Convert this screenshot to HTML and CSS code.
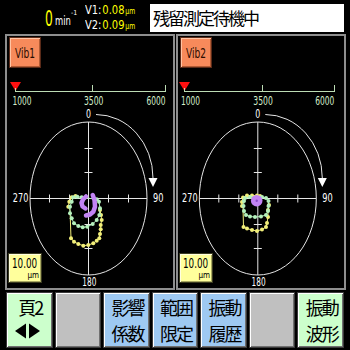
FILE: index.html
```html
<!DOCTYPE html>
<html lang="ja">
<head>
<meta charset="utf-8">
<title>残留測定待機中</title>
<link rel="stylesheet" href="styles.css">
</head>
<body>
<div class="screen">
  <header class="top">
    <div class="speed">
      <span class="rpm">0</span>
      <span class="unit"><span class="unit-txt">min</span><span class="unit-exp">-1</span></span>
      <div class="vals">
        <div class="val">V1:<span class="num">0.08</span><span class="um">μm</span></div>
        <div class="val">V2:<span class="num">0.09</span><span class="um">μm</span></div>
      </div>
    </div>
    <div class="title">残留測定待機中</div>
  </header>

  <main class="panels">
    <section class="panel">
      <div class="vib-btn"><span class="vib-txt">Vib1</span></div>
      <svg class="chart" width="166" height="220" viewBox="7 68 166 220">
        <polygon points="10,82 21,82 15.5,91" fill="#ff1010"/>
        <g class="scale">
          <line x1="15" y1="91.5" x2="166" y2="91.5"/>
          <line x1="15.5" y1="88" x2="15.5" y2="91"/>
          <line x1="92.5" y1="85" x2="92.5" y2="91"/>
          <line x1="165.5" y1="85" x2="165.5" y2="91"/>
        </g>
        <text class="scale-lbl" x="12.5" y="105" textLength="19" lengthAdjust="spacingAndGlyphs">1000</text>
        <text class="scale-lbl" x="84" y="105" textLength="19.5" lengthAdjust="spacingAndGlyphs">3500</text>
        <text class="scale-lbl" x="146.5" y="105" textLength="19" lengthAdjust="spacingAndGlyphs">6000</text>
        <g class="polar">
          <ellipse cx="88.5" cy="198.5" rx="58.5" ry="76.5"/>
          <line x1="30" y1="198.5" x2="147" y2="198.5"/>
          <line x1="88.5" y1="122" x2="88.5" y2="275"/>
          <line x1="49.5" y1="194.5" x2="49.5" y2="202.5"/>
          <line x1="69.5" y1="194.5" x2="69.5" y2="202.5"/>
          <line x1="108.5" y1="194.5" x2="108.5" y2="202.5"/>
          <line x1="128.5" y1="194.5" x2="128.5" y2="202.5"/>
          <line x1="84.5" y1="148.5" x2="92.5" y2="148.5"/>
          <line x1="84.5" y1="172.5" x2="92.5" y2="172.5"/>
          <line x1="84.5" y1="224.5" x2="92.5" y2="224.5"/>
          <line x1="84.5" y1="248.5" x2="92.5" y2="248.5"/>
          <path d="M96,114.5 A57,63.5 0 0 1 153,178"/>
          <polygon class="head" points="148.5,178 157.5,178 153,187"/>
          <text class="axis-lbl" x="86" y="118" textLength="5" lengthAdjust="spacingAndGlyphs">0</text>
          <text class="axis-lbl" x="12.8" y="202" textLength="15.5" lengthAdjust="spacingAndGlyphs">270</text>
          <text class="axis-lbl" x="153" y="202" textLength="10.5" lengthAdjust="spacingAndGlyphs">90</text>
          <text class="axis-lbl" x="82.3" y="286" textLength="14" lengthAdjust="spacingAndGlyphs">180</text>
        </g>
        <g class="trace yellow">
          <polyline points="100,210 101,215 101.7,220 100.7,225 100.7,229.3 100,234 99.3,238.3 96.7,240.7 93.3,243.3 88.3,245 83.3,245.7 78.3,244 74,241.7 71,238.3 70,210 68.3,206.7 69.3,201.7 71.7,197.3 75.5,196"/>
          <circle cx="100" cy="210" r="2"/><circle cx="101" cy="215" r="2"/><circle cx="101.7" cy="220" r="2"/><circle cx="100.7" cy="225" r="2"/><circle cx="100.7" cy="229.3" r="2"/><circle cx="100" cy="234" r="2"/><circle cx="99.3" cy="238.3" r="2"/><circle cx="96.7" cy="240.7" r="2"/><circle cx="93.3" cy="243.3" r="2"/><circle cx="88.3" cy="245" r="2"/><circle cx="83.3" cy="245.7" r="2"/><circle cx="78.3" cy="244" r="2"/><circle cx="74" cy="241.7" r="2"/><circle cx="71" cy="238.3" r="2"/><circle cx="68.3" cy="206.7" r="2"/><circle cx="69.3" cy="201.7" r="2"/><circle cx="71.7" cy="197.3" r="2"/><circle cx="75.5" cy="196" r="2"/>
        </g>
        <g class="trace green">
          <polyline points="73.3,197.3 77.3,196.7 81.7,197.3 96.7,199.3 99,201.7 100,208.3 99.3,215 96.7,220 92.7,224 87.3,226.7 82.7,227.3 78.3,226 74,223.3 71.7,218.3 70,213.3 70,206.7 71.7,201.7 73.3,197.3"/>
          <circle cx="73.3" cy="197.3" r="2"/><circle cx="77.3" cy="196.7" r="2"/><circle cx="81.7" cy="197.3" r="2"/><circle cx="96.7" cy="199.3" r="2"/><circle cx="99" cy="201.7" r="2"/><circle cx="100" cy="208.3" r="2"/><circle cx="99.3" cy="215" r="2"/><circle cx="96.7" cy="220" r="2"/><circle cx="92.7" cy="224" r="2"/><circle cx="87.3" cy="226.7" r="2"/><circle cx="82.7" cy="227.3" r="2"/><circle cx="78.3" cy="226" r="2"/><circle cx="74" cy="223.3" r="2"/><circle cx="71.7" cy="218.3" r="2"/><circle cx="70" cy="213.3" r="2"/><circle cx="70" cy="206.7" r="2"/><circle cx="71.7" cy="201.7" r="2"/>
        </g>
        <g class="trace purple">
          <polyline points="86,196.5 83,199.5 81.5,203 82.5,206.5 85.5,208.5"/>
          <polyline points="92.7,195 94.5,200 95,206.7 93.3,211.7 90,214.5 86,215.5"/>
        </g>
      </svg>
      <div class="range-box"><span class="range-num">10.00</span><span class="range-unit">μm</span></div>
    </section>

    <section class="panel">
      <div class="vib-btn"><span class="vib-txt">Vib2</span></div>
      <svg class="chart" width="166" height="220" viewBox="178 68 166 220">
        <polygon points="179,82 190,82 184.5,91" fill="#ff1010"/>
        <g class="scale">
          <line x1="184" y1="91.5" x2="335" y2="91.5"/>
          <line x1="184.5" y1="88" x2="184.5" y2="91"/>
          <line x1="262.5" y1="85" x2="262.5" y2="91"/>
          <line x1="334.5" y1="85" x2="334.5" y2="91"/>
        </g>
        <text class="scale-lbl" x="181" y="105" textLength="19" lengthAdjust="spacingAndGlyphs">1000</text>
        <text class="scale-lbl" x="253.3" y="105" textLength="19.5" lengthAdjust="spacingAndGlyphs">3500</text>
        <text class="scale-lbl" x="315.3" y="105" textLength="19" lengthAdjust="spacingAndGlyphs">6000</text>
        <g class="polar" transform="translate(169.3 0)">
          <ellipse cx="88.5" cy="198.5" rx="58.5" ry="76.5"/>
          <line x1="30" y1="198.5" x2="147" y2="198.5"/>
          <line x1="88.5" y1="122" x2="88.5" y2="275"/>
          <line x1="49.5" y1="194.5" x2="49.5" y2="202.5"/>
          <line x1="69.5" y1="194.5" x2="69.5" y2="202.5"/>
          <line x1="108.5" y1="194.5" x2="108.5" y2="202.5"/>
          <line x1="128.5" y1="194.5" x2="128.5" y2="202.5"/>
          <line x1="84.5" y1="148.5" x2="92.5" y2="148.5"/>
          <line x1="84.5" y1="172.5" x2="92.5" y2="172.5"/>
          <line x1="84.5" y1="224.5" x2="92.5" y2="224.5"/>
          <line x1="84.5" y1="248.5" x2="92.5" y2="248.5"/>
          <path d="M96,114.5 A57,63.5 0 0 1 153,178"/>
          <polygon class="head" points="148.5,178 157.5,178 153,187"/>
          <text class="axis-lbl" x="86" y="118" textLength="5" lengthAdjust="spacingAndGlyphs">0</text>
          <text class="axis-lbl" x="12.8" y="202" textLength="15.5" lengthAdjust="spacingAndGlyphs">270</text>
          <text class="axis-lbl" x="153" y="202" textLength="10.5" lengthAdjust="spacingAndGlyphs">90</text>
          <text class="axis-lbl" x="82.3" y="286" textLength="14" lengthAdjust="spacingAndGlyphs">180</text>
        </g>
        <g class="trace yellow">
          <polyline points="269,205 268,210 268,217 267,223 266,227 262,229.5 257,231 252,230 247,228.5 243.5,227 243,208 242,206 242,202 243,197.5 247,195.5 252,195.5 257,195.5 260,196"/>
          <circle cx="269" cy="205" r="2"/><circle cx="268" cy="210" r="2"/><circle cx="268" cy="217" r="2"/><circle cx="267" cy="223" r="2"/><circle cx="266" cy="227" r="2"/><circle cx="262" cy="229.5" r="2"/><circle cx="257" cy="231" r="2"/><circle cx="252" cy="230" r="2"/><circle cx="247" cy="228.5" r="2"/><circle cx="243.5" cy="227" r="2"/><circle cx="242" cy="206" r="2"/><circle cx="242" cy="202" r="2"/><circle cx="243" cy="197.5" r="2"/><circle cx="247" cy="195.5" r="2"/><circle cx="252" cy="195.5" r="2"/><circle cx="257" cy="195.5" r="2"/><circle cx="260" cy="196" r="2"/>
        </g>
        <g class="trace green">
          <polyline points="245,198 250,197 255,197 262,197 266,198 268.5,201 268.5,206 268,211 266,215 261,216.5 255,217 250,216.5 246,215 244,211 243.5,206 244,201 245,198"/>
          <circle cx="245" cy="198" r="2"/><circle cx="250" cy="197" r="2"/><circle cx="262" cy="197" r="2"/><circle cx="266" cy="198" r="2"/><circle cx="268.5" cy="201" r="2"/><circle cx="268.5" cy="206" r="2"/><circle cx="268" cy="211" r="2"/><circle cx="266" cy="215" r="2"/><circle cx="261" cy="216.5" r="2"/><circle cx="255" cy="217" r="2"/><circle cx="250" cy="216.5" r="2"/><circle cx="246" cy="215" r="2"/><circle cx="244" cy="211" r="2"/><circle cx="243.5" cy="206" r="2"/><circle cx="244" cy="201" r="2"/>
        </g>
        <circle cx="256.7" cy="200.7" r="5.8" fill="#c284f4"/>
        <circle cx="256.7" cy="200.7" r="1.2" fill="#8a4cc8"/>
      </svg>
      <div class="range-box"><span class="range-num">10.00</span><span class="range-unit">μm</span></div>
    </section>
  </main>

  <footer class="keys">
    <div class="key key-green">
      <span class="key-line">頁2</span>
      <svg class="arrows" width="26" height="16" viewBox="0 0 26 16">
        <polygon points="0,8 11,0.5 11,15.5" fill="#000"/>
        <polygon points="14,0.5 25,8 14,15.5" fill="#000"/>
      </svg>
    </div>
    <div class="key key-gray"></div>
    <div class="key key-blue"><span class="key-line">影響</span><span class="key-line">係数</span></div>
    <div class="key key-blue"><span class="key-line">範囲</span><span class="key-line">限定</span></div>
    <div class="key key-blue"><span class="key-line">振動</span><span class="key-line">履歴</span></div>
    <div class="key key-gray"></div>
    <div class="key key-green"><span class="key-line">振動</span><span class="key-line">波形</span></div>
  </footer>
</div>
</body>
</html>
```

FILE: styles.css
```css
html, body {
  margin: 0;
  padding: 0;
  background: #000;
}

body {
  width: 350px;
  height: 350px;
  overflow: hidden;
  font-family: "DejaVu Sans Condensed", "Liberation Sans", sans-serif;
}

.screen {
  display: flex;
  flex-direction: column;
  width: 350px;
  height: 350px;
}

/* ---------- header ---------- */
.top {
  display: flex;
  height: 34px;
  flex: none;
}

.speed {
  width: 150px;
  box-sizing: border-box;
  padding-left: 45px;
  display: flex;
  align-items: flex-start;
  color: #fff;
}

.rpm {
  display: inline-block;
  color: #ffff00;
  font-size: 22px;
  line-height: 22px;
  margin-top: 8px;
  transform: scaleX(0.62);
  transform-origin: left;
  width: 10px;
}

.unit {
  display: flex;
  align-items: flex-start;
  width: 30px;
  margin-top: 10px;
}

.unit-txt {
  display: inline-block;
  width: 15px;
  font-size: 13px;
  line-height: 13px;
  margin-top: 4px;
  transform: scaleX(0.72);
  transform-origin: left;
}

.unit-exp {
  font-size: 7px;
  line-height: 7px;
  margin-left: 1px;
}

.vals {
  margin-top: 3px;
  display: flex;
  flex-direction: column;
  transform: scaleX(0.85);
  transform-origin: left;
}

.val {
  font-size: 13px;
  line-height: 13px;
  color: #fff;
  white-space: nowrap;
}

.num {
  color: #ffff00;
  margin-left: 1px;
}

.um {
  color: #ffff00;
  font-size: 8px;
  margin-left: 1px;
}

.title {
  margin-top: 4px;
  width: 194px;
  height: 28px;
  background: #fff;
  color: #000;
  box-sizing: border-box;
  padding-left: 3px;
  font-family: "Noto Sans CJK JP", sans-serif;
  font-size: 17px;
  letter-spacing: -2px;
  line-height: 28px;
}

/* ---------- panels ---------- */
.panels {
  display: flex;
  gap: 1px;
  padding-left: 5px;
  height: 256px;
  flex: none;
}

.panel {
  position: relative;
  width: 170px;
  height: 256px;
  box-sizing: border-box;
  border: 2px solid #8e8e8e;
  display: flex;
  flex-direction: column;
}

.vib-btn {
  margin: 1px 0 0 2px;
  width: 32px;
  height: 31px;
  box-sizing: border-box;
  background: #f78a5b;
  border: 1px solid #5a2a18;
  box-shadow: inset 1px 1px 0 #ffc4a4, inset -1px -1px 0 #b05a34;
  color: #2a0c00;
  display: flex;
  align-items: center;
  justify-content: center;
}

.vib-txt {
  display: inline-block;
  font-size: 14px;
  transform: scaleX(0.72);
}

.chart {
  display: block;
  flex: none;
}

.scale line {
  stroke: #bcdcb4;
  stroke-width: 1;
}

.scale-lbl {
  fill: #d4eecb;
  font-size: 12.5px;
  font-family: "DejaVu Sans Condensed", "Liberation Sans", sans-serif;
}

.polar ellipse,
.polar line,
.polar path {
  fill: none;
  stroke: #e6e6e6;
  stroke-width: 1;
}

.polar .head {
  fill: #fff;
}

.axis-lbl {
  fill: #fff;
  font-size: 12.5px;
  font-family: "DejaVu Sans Condensed", "Liberation Sans", sans-serif;
}

.trace polyline {
  fill: none;
  stroke-width: 1;
}

.trace.yellow polyline { stroke: #f2ef7a; }
.trace.yellow circle { fill: #f2ef7a; }
.trace.green polyline { stroke: #b4f0bc; }
.trace.green circle { fill: #b4f0bc; }

.trace.purple polyline {
  stroke: #c284f4;
  stroke-width: 4.5;
  stroke-linecap: round;
  stroke-linejoin: round;
}

.range-box {
  position: absolute;
  left: 1px;
  top: 217px;
  width: 34px;
  height: 30px;
  box-sizing: border-box;
  background: #ffff9c;
  border: 1px solid #3a3a20;
  box-shadow: inset 1px 1px 0 #ffffe0, inset -1px -1px 0 #a8a860;
  display: flex;
  flex-direction: column;
  padding: 2px 2px 0 3px;
}

.range-num {
  display: inline-block;
  font-size: 14px;
  line-height: 14px;
  color: #000;
  transform: scaleX(0.7);
  transform-origin: left;
  white-space: nowrap;
}

.range-unit {
  font-size: 8px;
  line-height: 9px;
  color: #000;
  align-self: flex-end;
  margin-top: 1px;
}

/* ---------- keys ---------- */
.keys {
  display: grid;
  grid-template-columns: repeat(7, 1fr);
  gap: 2px;
  margin: 2px 6px 0 6px;
  height: 56px;
  flex: none;
}

.key {
  box-sizing: border-box;
  border: 1px solid #3a3a3a;
  box-shadow: inset 1px 1px 0 #ffffff, inset -1px -1px 0 #707070;
  display: flex;
  flex-direction: column;
  align-items: center;
  padding-top: 1px;
  font-family: "Noto Sans CJK JP", sans-serif;
  font-size: 18px;
  line-height: 26px;
  color: #000;
}

.key-line {
  letter-spacing: -2px;
  margin-right: -2px;
}

.key-green { background: #ccffcc; }
.key-gray { background: #c0c0c0; }
.key-blue { background: #9ec9f2; }

.arrows {
  display: block;
  margin-top: 3px;
  margin-left: -3px;
}
```
